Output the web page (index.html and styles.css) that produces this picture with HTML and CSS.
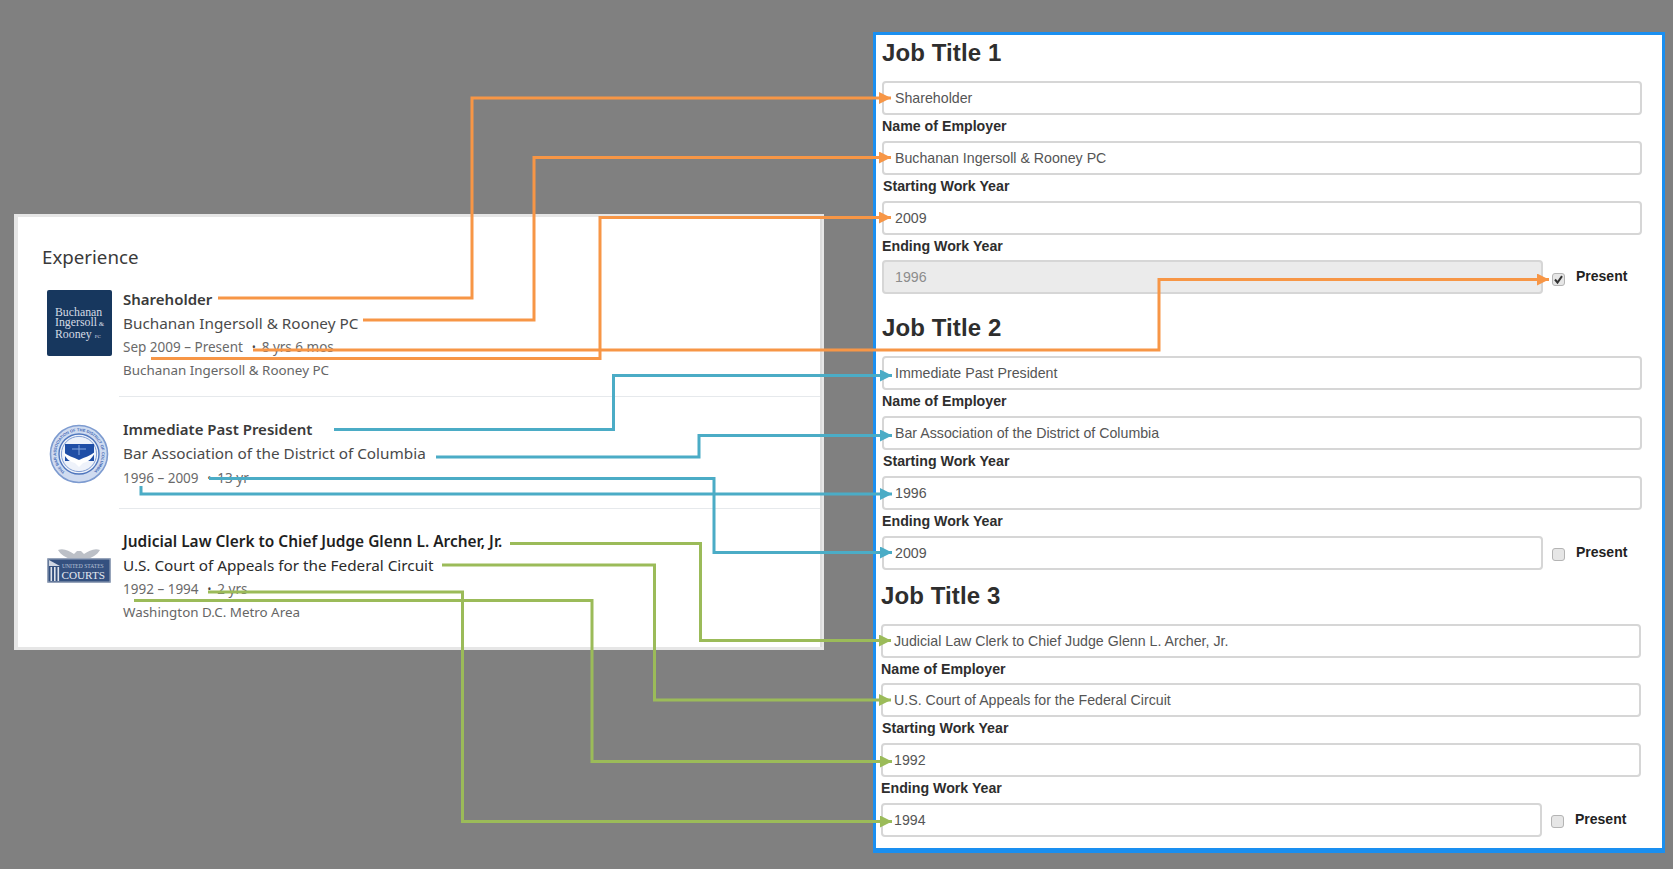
FILE: index.html
```html
<!DOCTYPE html>
<html lang="en">
<head>
<meta charset="utf-8">
<title>Experience mapped to job form</title>
<link rel="stylesheet" href="styles.css">
</head>
<body>
<section class="profile">
  <h2 class="profile-title">Experience</h2>

  <article class="entry">
    <div class="logo logo-first">
      <div class="bir">Buchanan<br>Ingersoll<span class="bir-small"> &amp;</span><br>Rooney <span class="bir-tiny">PC</span></div>
    </div>
    <div class="entry-body">
      <div class="role">Shareholder</div>
      <div class="org">Buchanan Ingersoll &amp; Rooney PC</div>
      <div class="dates"><span>Sep 2009 – Present</span><span class="dot">•</span><span>8 yrs 6 mos</span></div>
      <div class="place">Buchanan Ingersoll &amp; Rooney PC</div>
    </div>
  </article>

  <article class="entry entry-mid">
    <div class="logo logo-seal">
      <svg width="60" height="60" viewBox="0 0 60 60" aria-hidden="true">
        <defs><path id="sealarc" d="M30 30m-22.800 0a22.800 22.800 0 1 1 45.600 0a22.800 22.800 0 1 1-45.600 0"/></defs>
        <circle cx="30" cy="30" r="28.500" fill="#cfdbf0" stroke="#7d9bd0" stroke-width="1.600"/>
        <circle cx="30" cy="30" r="20" fill="#eef2fa" stroke="#4f76bd" stroke-width="1.400"/>
        <circle cx="30" cy="30" r="17.600" fill="none" stroke="#7f9dd3" stroke-width="1"/>
        <text class="seal-text" transform="rotate(-52 30 30)"><textPath href="#sealarc">THE BAR ASSOCIATION OF THE DISTRICT OF COLUMBIA</textPath></text>
        <rect x="16" y="20" width="29" height="17" fill="#1f4ea6"/>
        <path d="M14 28c5 4 10 5 16 8 6-3 11-4 16-8-2 6-7 10-12 11l-4 4-4-4c-5-1-10-5-12-11z" fill="#fff"/>
        <path d="M30 21v10M23 25h14" stroke="#86a8e0" stroke-width="1"/>
      </svg>
    </div>
    <div class="entry-body">
      <div class="role">Immediate Past President</div>
      <div class="org">Bar Association of the District of Columbia</div>
      <div class="dates"><span>1996 – 2009</span><span class="dot">•</span><span>13 yr</span></div>
    </div>
  </article>

  <article class="entry entry-last">
    <div class="logo logo-courts">
      <svg width="64" height="36" viewBox="0 0 64 36" aria-hidden="true">
        <path d="M11 3c6-2 11 1 16 4l3-3h4l3 3c5-3 10-6 16-4-3 5-8 8-14 9l-1 2H26l-1-2C19 11 14 8 11 3z" fill="#bcc0c7"/>
        <rect x="0" y="11" width="64" height="25" rx="1" fill="#97a4ba"/>
        <rect x="1.500" y="12.500" width="61" height="22" fill="#34507f"/>
        <path d="M2 13l11 6H2z" fill="#cfd6e2"/>
        <path d="M3.500 20h1.600v14H3.500zM7 20h1.600v14H7zM10.500 20h1.600v14h-1.600z" fill="#dfe4ec"/>
        <text class="courts-small" x="15" y="20.500">UNITED STATES</text>
        <text class="courts-big" x="14.500" y="32">COURTS</text>
      </svg>
    </div>
    <div class="entry-body">
      <div class="role role-strong">Judicial Law Clerk to Chief Judge Glenn L. Archer, Jr.</div>
      <div class="org org-strong">U.S. Court of Appeals for the Federal Circuit</div>
      <div class="dates"><span>1992 – 1994</span><span class="dot">•</span><span>2 yrs</span></div>
      <div class="place">Washington D.C. Metro Area</div>
    </div>
  </article>
</section>

<section class="form">
  <div class="job job-first">
    <h2 class="job-title">Job Title 1</h2>
    <div class="field">Shareholder</div>
    <div class="label">Name of Employer</div>
    <div class="field">Buchanan Ingersoll &amp; Rooney PC</div>
    <div class="label label-nudge">Starting Work Year</div>
    <div class="field">2009</div>
    <div class="label">Ending Work Year</div>
    <div class="end-row">
      <div class="field field-short field-off">1996</div>
      <span class="check"><svg width="11" height="11" viewBox="0 0 11 11" aria-hidden="true"><path d="M2 5.500l2.500 3L9 2.200" fill="none" stroke="#333" stroke-width="2"/></svg></span>
      <span class="present">Present</span>
    </div>
  </div>

  <div class="job job-second">
    <h2 class="job-title">Job Title 2</h2>
    <div class="field">Immediate Past President</div>
    <div class="label">Name of Employer</div>
    <div class="field">Bar Association of the District of Columbia</div>
    <div class="label label-nudge">Starting Work Year</div>
    <div class="field">1996</div>
    <div class="label">Ending Work Year</div>
    <div class="end-row">
      <div class="field field-short">2009</div>
      <span class="check"></span>
      <span class="present">Present</span>
    </div>
  </div>

  <div class="job job-third">
    <h2 class="job-title">Job Title 3</h2>
    <div class="field">Judicial Law Clerk to Chief Judge Glenn L. Archer, Jr.</div>
    <div class="label">Name of Employer</div>
    <div class="field">U.S. Court of Appeals for the Federal Circuit</div>
    <div class="label label-nudge">Starting Work Year</div>
    <div class="field">1992</div>
    <div class="label">Ending Work Year</div>
    <div class="end-row">
      <div class="field field-short">1994</div>
      <span class="check"></span>
      <span class="present">Present</span>
    </div>
  </div>
</section>

<svg class="links" width="1673" height="869" viewBox="0 0 1673 869" aria-hidden="true">
  <defs>
    <marker id="a-orange" markerUnits="userSpaceOnUse" markerWidth="12" markerHeight="12" refX="12" refY="6" orient="auto"><path d="M0 0L12 6L0 12z" fill="#f79646"/></marker>
    <marker id="a-blue" markerUnits="userSpaceOnUse" markerWidth="12" markerHeight="12" refX="12" refY="6" orient="auto"><path d="M0 0L12 6L0 12z" fill="#4bacc6"/></marker>
    <marker id="a-green" markerUnits="userSpaceOnUse" markerWidth="12" markerHeight="12" refX="12" refY="6" orient="auto"><path d="M0 0L12 6L0 12z" fill="#9bbb59"/></marker>
  </defs>
  <g class="wire wire-orange">
    <polyline points="218,298 472,298 472,98 891,98" marker-end="url(#a-orange)"/>
    <polyline points="363,320 534,320 534,157.500 891,157.500" marker-end="url(#a-orange)"/>
    <polyline points="151,358.500 600,358.500 600,217.500 891,217.500" marker-end="url(#a-orange)"/>
    <polyline points="253,350 1159,350 1159,279.500 1549,279.500" marker-end="url(#a-orange)"/>
  </g>
  <g class="wire wire-blue">
    <polyline points="334,429.500 613.500,429.500 613.500,375.500 892,375.500" marker-end="url(#a-blue)"/>
    <polyline points="436,457 699,457 699,435.500 892,435.500" marker-end="url(#a-blue)"/>
    <polyline points="209,478.500 714,478.500 714,552.500 892,552.500" marker-end="url(#a-blue)"/>
    <polyline points="141,486 141,494 892,494" marker-end="url(#a-blue)"/>
  </g>
  <g class="wire wire-green">
    <polyline points="510,543.500 700.500,543.500 700.500,640.500 891,640.500" marker-end="url(#a-green)"/>
    <polyline points="442,565 654.500,565 654.500,700 891,700" marker-end="url(#a-green)"/>
    <polyline points="134,600.500 592,600.500 592,761.500 892,761.500" marker-end="url(#a-green)"/>
    <polyline points="208,592 462.500,592 462.500,821.500 892,821.500" marker-end="url(#a-green)"/>
  </g>
</svg>
</body>
</html>
```
FILE: styles.css
```css
* { box-sizing: border-box; }

html, body { margin: 0; padding: 0; }

body {
  position: relative;
  display: flex;
  align-items: flex-start;
  width: 1673px;
  height: 869px;
  overflow: hidden;
  background: #808080;
}

/* Left: profile card */
.profile {
  width: 810px;
  height: 436px;
  margin: 214px 0 0 14px;
  padding: 25px 0 0 0;
  background: #fff;
  border: solid #e6e6e6;
  border-width: 3px 2px 3px 4px;
  box-shadow: inset -2px 0 0 #dcdcdc, inset 0 -1px 0 #fff;
  font-family: "Noto Sans", sans-serif;
  color: #444;
}

.profile-title {
  margin: 1px 0 16px 24px;
  font-size: 18.700px;
  line-height: 28px;
  font-weight: 400;
  color: #3a3a3a;
}

.entry {
  display: grid;
  grid-template-columns: 65px 1fr;
  column-gap: 7px;
  padding: 0 2px 0 29px;
}

.logo { min-width: 0; }
.logo-first { margin-top: 3px; }
.logo-seal svg, .logo-courts svg { display: block; }

.bir {
  width: 65px;
  height: 66px;
  padding: 17px 0 0 8px;
  border-radius: 2px;
  background: #17375e;
  font-family: "Liberation Serif", serif;
  font-size: 11.800px;
  line-height: 10px;
  color: #d5dbe5;
  overflow: hidden;
  white-space: nowrap;
}
.bir-small { font-size: 7px; }
.bir-tiny { font-size: 5px; }

.seal-text {
  font-family: "Liberation Sans", sans-serif;
  font-size: 4px;
  font-weight: 700;
  fill: #3f68b5;
}

.courts-small {
  font-family: "Liberation Serif", serif;
  font-size: 5.600px;
  fill: #b9c4d8;
}
.courts-big {
  font-family: "Liberation Serif", serif;
  font-size: 11.200px;
  fill: #e6eaf1;
}

.entry-body {
  padding: 0 0 15px 4px;
  border-bottom: 1px solid #e6e9ec;
}
.entry-mid .entry-body { padding-top: 20px; padding-bottom: 17px; }
.entry-mid .dates { line-height: 26px; }
.entry-mid .logo-seal { margin-top: 27px; padding-left: 2px; }
.entry-last .entry-body { padding-top: 20px; border-bottom: 0; }
.entry-last .logo-courts { margin-top: 38px; }

.role {
  font-size: 15px;
  line-height: 24px;
  font-weight: 600;
  color: #3a3a3a;
}
.role-strong { color: #1f1f1f; font-size: 15.450px; }

.org {
  font-size: 15.300px;
  line-height: 24px;
  color: #4a4a4a;
}
.org-strong { color: #2b2b2b; }

.dates {
  display: flex;
  font-size: 13.500px;
  line-height: 24px;
  color: #6a6a6a;
}
.dot { margin: 0 6px 0 9px; color: #444; font-size: 10px; }

.place {
  font-size: 13.400px;
  line-height: 22px;
  color: #666;
}

/* Right: job form */
.form {
  width: 792px;
  height: 821px;
  margin: 32px 0 0 49px;
  padding: 0 20px 0 6px;
  background: #fff;
  border: solid #1a8ff0;
  border-width: 3px 3px 5px 3px;
  font-family: "Liberation Sans", sans-serif;
  color: #333;
}

.job-second { margin-top: 16px; }
.job-third { margin: 8px 1px 0 -1px; }

.job-title {
  margin: 0 0 10px;
  font-size: 24px;
  line-height: 36px;
  font-weight: 700;
  letter-spacing: 0.1px;
  color: #2e2e2e;
}

.field {
  height: 34px;
  padding: 0 11px 0 11px;
  border: 2px solid #d6d6d6;
  border-radius: 4px;
  background: #fff;
  font-size: 14.200px;
  line-height: 31px;
  color: #555;
}

.field-short { width: 661px; flex: none; }
.field-off { background: #ebebeb; color: #8c8c8c; }

.label {
  height: 25.750px;
  font-size: 14.200px;
  line-height: 23px;
  font-weight: 700;
  color: #2e2e2e;
}
.label-nudge { padding-left: 1px; }

.end-row {
  display: flex;
  align-items: center;
}

.check {
  display: flex;
  align-items: center;
  justify-content: center;
  width: 13px;
  height: 13px;
  margin: 4px 11px 0 9px;
  border: 1px solid #b4b4b4;
  border-radius: 3px;
  background: #e6e6e6;
}

.present {
  margin-top: -2px;
  font-size: 14px;
  line-height: 22px;
  font-weight: 700;
  color: #222;
}

/* Overlay: connector lines */
.links {
  position: absolute;
  left: 0;
  top: 0;
  pointer-events: none;
}

.wire polyline {
  fill: none;
  stroke-width: 3px;
}
.wire-orange polyline { stroke: #f79646; }
.wire-blue polyline { stroke: #4bacc6; }
.wire-green polyline { stroke: #9bbb59; }
```
